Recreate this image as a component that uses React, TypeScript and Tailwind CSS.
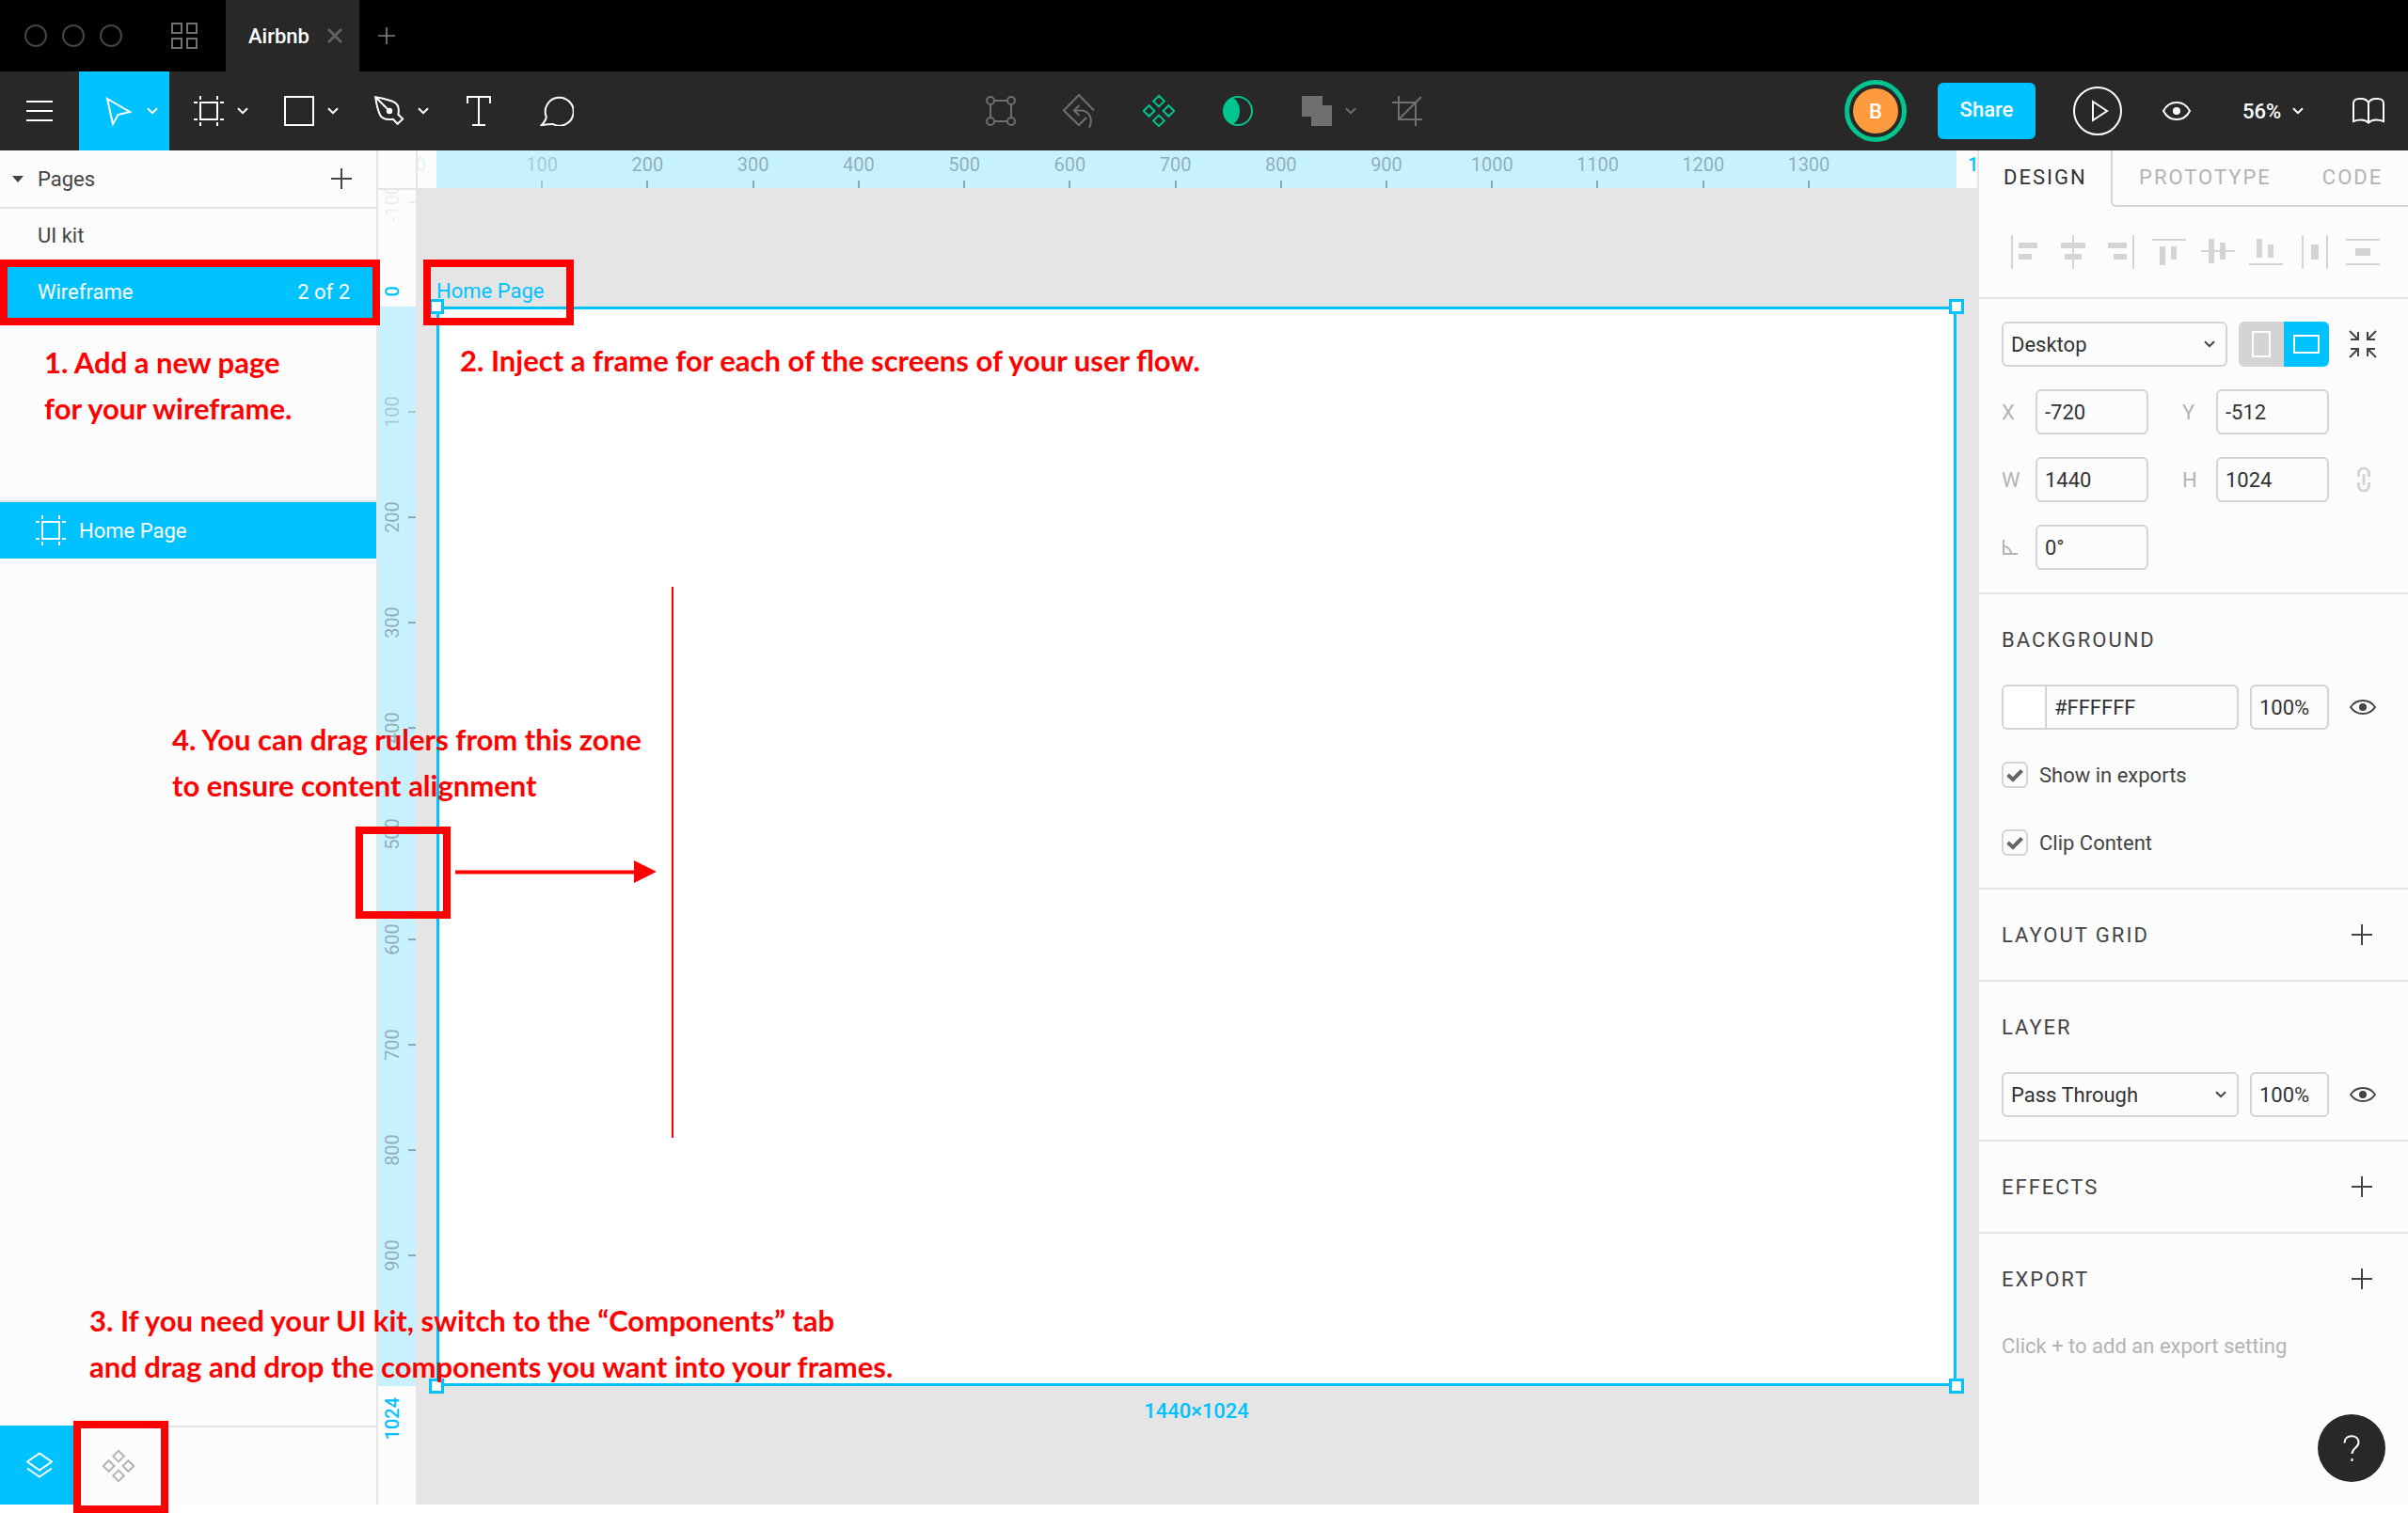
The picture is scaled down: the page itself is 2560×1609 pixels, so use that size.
import type { ReactNode } from "react";

const roboto = "font-['Roboto',sans-serif]";

/* ---------- Icons ---------- */

function Chevron() {
  return (
    <svg width="12" height="8" viewBox="0 0 12 8" fill="none" stroke="currentColor" strokeWidth="2" aria-hidden="true">
      <path d="M1 1.2 6 6.2 11 1.2" />
    </svg>
  );
}

function Plus({ size }: { size: number }) {
  return (
    <svg width={size} height={size} viewBox="0 0 22 22" fill="none" stroke="currentColor" strokeWidth="2" aria-hidden="true">
      <path d="M11 0V22M0 11H22" />
    </svg>
  );
}

function FrameIcon() {
  return (
    <svg width="32" height="32" viewBox="0 0 32 32" fill="none" stroke="currentColor" strokeWidth="2" aria-hidden="true">
      <rect x="7" y="7" width="18" height="18" />
      <path d="M7 0V4M25 0V4M7 28V32M25 28V32M0 7H4M0 25H4M28 7H32M28 25H32" />
    </svg>
  );
}

function ComponentsIcon() {
  return (
    <svg width="36" height="36" viewBox="0 0 36 36" fill="none" stroke="currentColor" strokeWidth="2" aria-hidden="true">
      <path d="M18 1.8 23.8 7.6 18 13.4 12.2 7.6ZM18 22.6 23.8 28.4 18 34.2 12.2 28.4ZM7.6 12.2 13.4 18 7.6 23.8 1.8 18ZM28.4 12.2 34.2 18 28.4 23.8 22.6 18Z" />
    </svg>
  );
}

function EyeIcon() {
  return (
    <svg width="30" height="20" viewBox="0 0 30 20" fill="none" stroke="currentColor" strokeWidth="2" aria-hidden="true">
      <path d="M1 10C4 4 9 1 15 1S26 4 29 10C26 16 21 19 15 19S4 16 1 10Z" />
      <circle cx="15" cy="10" r="4" fill="currentColor" stroke="none" />
    </svg>
  );
}

function SmallEye() {
  return (
    <svg width="28" height="16" viewBox="0 0 28 16" fill="none" stroke="currentColor" strokeWidth="2" aria-hidden="true">
      <path d="M1 8C4 3.4 8.5 1 14 1S24 3.4 27 8C24 12.6 19.500 15 14 15S4 12.600 1 8Z" />
      <circle cx="14" cy="8" r="4" fill="currentColor" stroke="none" />
    </svg>
  );
}

const alignIcons: { label: string; d: string; lines: string }[] = [
  { label: "Align left", lines: "M5 0V36", d: "M12 8H32V14H12ZM12 20H26V26H12Z" },
  { label: "Align horizontal centers", lines: "M19 0V36", d: "M6 8H32V14H6ZM10 20H28V26H10Z" },
  { label: "Align right", lines: "M31 0V36", d: "M4 8H24V14H4ZM10 20H24V26H10Z" },
  { label: "Align top", lines: "M0 5H36", d: "M8 12H14V32H8ZM20 12H26V26H20Z" },
  { label: "Align vertical centers", lines: "M0 17H36", d: "M8 4H14V30H8ZM20 8H26V26H20Z" },
  { label: "Align bottom", lines: "M0 31H36", d: "M8 4H14V24H8ZM20 10H26V24H20Z" },
  { label: "Distribute horizontal spacing", lines: "M5 0V36M31 0V36", d: "M14 10H22V26H14Z" },
  { label: "Distribute vertical spacing", lines: "M0 5H36M0 31H36", d: "M10 14H26V22H10Z" },
];

/* ---------- Window chrome ---------- */

function TabBar() {
  return (
    <header className="flex h-[76px] shrink-0 items-stretch bg-black">
      <div className="flex items-center gap-4 pl-[26px]">
        <span className="size-6 rounded-full border-2 border-[#444]" />
        <span className="size-6 rounded-full border-2 border-[#444]" />
        <span className="size-6 rounded-full border-2 border-[#444]" />
      </div>
      <button type="button" aria-label="All files" className="flex items-center pr-[30px] pl-[52px] text-[#707070]">
        <svg width="28" height="28" viewBox="0 0 28 28" fill="none" stroke="currentColor" strokeWidth="2">
          <path d="M1 1H11V11H1ZM17 1H27V11H17ZM1 17H11V27H1ZM17 17H27V27H17Z" />
        </svg>
      </button>
      <div className="flex w-[142px] items-center justify-between bg-[#282828] pr-[18px] pl-6">
        <span className="text-[22px] font-medium text-white">Airbnb</span>
        <button type="button" aria-label="Close tab" className="text-[#606060]">
          <svg width="16" height="16" viewBox="0 0 16 16" fill="none" stroke="currentColor" strokeWidth="3">
            <path d="M1 1 15 15M15 1 1 15" />
          </svg>
        </button>
      </div>
      <button type="button" aria-label="New tab" className="px-5 text-[#808080]">
        <Plus size={18} />
      </button>
    </header>
  );
}

function Tool({
  label,
  menu = false,
  active = false,
  width = "w-[84px]",
  color = "text-white",
  children,
}: {
  label: string;
  menu?: boolean;
  active?: boolean;
  width?: string;
  color?: string;
  children: ReactNode;
}) {
  return (
    <button
      type="button"
      aria-label={label}
      className={`flex h-full items-center ${menu ? "w-24" : width} ${active ? "bg-[#00c2ff]" : ""} ${color}`}
    >
      <span className={`flex shrink-0 justify-center ${width}`}>{children}</span>
      {menu && (
        <span className="-ml-3 shrink-0">
          <Chevron />
        </span>
      )}
    </button>
  );
}

function Toolbar() {
  return (
    <nav className="flex h-[84px] shrink-0 items-center bg-[#282828]">
      <div className="flex h-full flex-1">
        <Tool label="Main menu">
          <svg width="28" height="22" viewBox="0 0 28 22" stroke="currentColor" strokeWidth="2">
            <path d="M0 1H28M0 11H28M0 21H28" />
          </svg>
        </Tool>
        <Tool label="Move" menu active>
          <svg width="28" height="32" viewBox="0 0 28 32" fill="none" stroke="currentColor" strokeWidth="2">
            <path d="M2 3 26 17 13.500 20 8 30Z" />
          </svg>
        </Tool>
        <Tool label="Frame" menu>
          <FrameIcon />
        </Tool>
        <Tool label="Rectangle" menu>
          <svg width="32" height="32" viewBox="0 0 32 32" fill="none" stroke="currentColor" strokeWidth="2">
            <rect x="1" y="1" width="30" height="30" />
          </svg>
        </Tool>
        <Tool label="Pen" menu>
          <svg width="32" height="32" viewBox="0 0 32 32" fill="none" stroke="currentColor" strokeWidth="2">
            <path d="M1.200 1.200C2 8 4 16 6.200 20.500 8.500 24.800 13 25.800 20 24.800L24.600 29.800 30.200 24.400 25.400 19.800C26.600 13.500 26 9.500 21.500 6.800 16.500 4 8.500 2.600 1.200 1.200ZM1.200 1.200 15 15" />
            <circle cx="16" cy="16" r="3.200" fill="currentColor" stroke="none" />
          </svg>
        </Tool>
        <Tool label="Text" width="w-[82px]">
          <svg width="26" height="32" viewBox="0 0 26 32" fill="none" stroke="currentColor" strokeWidth="2">
            <path d="M1 8V1H25V8M13 1V31M6 31H20" />
          </svg>
        </Tool>
        <Tool label="Comment">
          <svg width="36" height="32" viewBox="0 0 36 32" fill="none" stroke="currentColor" strokeWidth="2">
            <path d="M6.800 22.300A15 15 0 1 1 14 30.100C10 30 6 30.500 1.800 31 4.500 28 6.500 25.500 6.800 22.300Z" />
          </svg>
        </Tool>
      </div>

      <div className="flex h-full">
        <Tool label="Edit object" color="text-[#6f6f6f]">
          <svg width="32" height="32" viewBox="0 0 32 32" fill="none" stroke="currentColor" strokeWidth="2">
            <circle cx="5" cy="5" r="4" />
            <circle cx="27" cy="5" r="4" />
            <circle cx="5" cy="27" r="4" />
            <circle cx="27" cy="27" r="4" />
            <path d="M9 5H23M9 27H23M5 9V23M27 9V23" />
          </svg>
        </Tool>
        <Tool label="Reset instance" color="text-[#6f6f6f]">
          <svg width="36" height="38" viewBox="1 0 36 38" fill="none" stroke="currentColor" strokeWidth="2">
            <path d="M34 18.500 18 2 2 18.500 18 34 26 26M18.500 13 13 18.500 18.500 24M13 18.500H20C28 18.500 34 26 29 37" />
          </svg>
        </Tool>
        <Tool label="Create component" color="text-[#00c58f]">
          <ComponentsIcon />
        </Tool>
        <Tool label="Use as mask" color="text-[#00c58f]">
          <svg width="32" height="32" viewBox="0 0 32 32" fill="none" stroke="currentColor" strokeWidth="2">
            <circle cx="16" cy="16" r="15" />
            <path d="M11 2A15 15 0 0 0 11 30C15.500 27 18 22 18 16S15.500 5 11 2Z" fill="currentColor" stroke="none" />
          </svg>
        </Tool>
        <Tool label="Union selection" menu color="text-[#6f6f6f]">
          <svg width="32" height="32" viewBox="0 0 32 32" fill="currentColor">
            <path d="M0 0H22V10H32V32H10V22H0Z" />
          </svg>
        </Tool>
        <Tool label="Crop image" color="text-[#6f6f6f]">
          <svg width="32" height="32" viewBox="0 0 32 32" fill="none" stroke="currentColor" strokeWidth="2">
            <path d="M7 0V25H32M0 7H25V32M7 25 31 1" />
          </svg>
        </Tool>
      </div>

      <div className="flex h-full flex-1 items-center justify-end">
        <button
          type="button"
          aria-label="Account"
          className="flex size-[66px] items-center justify-center rounded-full border-[5px] border-[#00c58f]"
        >
          <span className="flex size-12 items-center justify-center rounded-full bg-[#ff9a3e] text-[22px] font-medium text-white">
            B
          </span>
        </button>
        <button
          type="button"
          className="mr-6 ml-[33px] h-[60px] w-[104px] rounded-md bg-[#00c2ff] pb-1 text-[22px] font-medium text-white"
        >
          Share
        </button>
        <Tool label="Present">
          <svg width="52" height="52" viewBox="0 0 52 52" fill="none" stroke="currentColor" strokeWidth="2">
            <circle cx="26" cy="26" r="25" />
            <path d="M21 16V36L36 26Z" />
          </svg>
        </Tool>
        <Tool label="View settings">
          <EyeIcon />
        </Tool>
        <button type="button" className="flex h-full w-[120px] items-center gap-3 pl-7 text-[22px] font-medium text-white">
          56%
          <Chevron />
        </button>
        <Tool label="Libraries">
          <svg width="34" height="28" viewBox="0 0 34 28" fill="none" stroke="currentColor" strokeWidth="2">
            <path d="M17 5C15 2 12.500 1 9.500 1H7C3.500 1 1 3 1 6V25C6 23 13 22.500 17 26.500 21 22.500 28 23 33 25V6C33 3 30.500 1 27 1H24.500C21.500 1 19 2 17 5ZM17 5V26" />
          </svg>
        </Tool>
      </div>
    </nav>
  );
}

/* ---------- Left panel ---------- */

function LayersPanel() {
  return (
    <aside className="flex w-[402px] shrink-0 flex-col border-r-2 border-[#e5e5e5] bg-[#fcfcfc] text-[22px] text-[#444]">
      <div className="flex h-[62px] items-center border-b-2 border-[#e5e5e5] pr-[26px] pl-[13px]">
        <button type="button" className="flex flex-1 items-center gap-[15px]">
          <svg width="12" height="7" viewBox="0 0 12 7" fill="currentColor" aria-hidden="true">
            <path d="M0 0H12L6 7Z" />
          </svg>
          Pages
        </button>
        <button type="button" aria-label="Add page">
          <Plus size={22} />
        </button>
      </div>
      <button type="button" className="flex h-[58px] items-center pb-[2px] pl-10">
        UI kit
      </button>
      <button type="button" className="flex h-[60px] items-center justify-between bg-[#00c2ff] pr-7 pl-10 text-white">
        <span>Wireframe</span>
        <span>2 of 2</span>
      </button>
      <div className="h-[194px] border-b-2 border-[#e5e5e5]" />
      <button type="button" className="flex h-[60px] items-center gap-[14px] bg-[#00c2ff] pl-[38px] text-white">
        <FrameIcon />
        Home Page
      </button>
      <div className="flex-1" />
      <div className="flex h-[84px]">
        <button type="button" aria-label="Layers" className="flex w-[84px] items-center justify-center bg-[#00c2ff] text-white">
          <svg width="28" height="28" viewBox="0 0 28 28" fill="none" stroke="currentColor" strokeWidth="2">
            <path d="M14 1.500 27 10.500 14 19.500 1 10.500ZM1 17.500 14 26.500 27 17.500" />
          </svg>
        </button>
        <div className="flex flex-1 border-t-2 border-[#e5e5e5]">
          <button type="button" aria-label="Components" className="flex w-[84px] items-center justify-center text-[#b3b3b3]">
            <ComponentsIcon />
          </button>
        </div>
      </div>
    </aside>
  );
}

/* ---------- Canvas ---------- */

const FRAME_W = 1440;
const FRAME_H = 1024;
const xTicks = [100, 200, 300, 400, 500, 600, 700, 800, 900, 1000, 1100, 1200, 1300];
const yTicks = [100, 200, 300, 400, 500, 600, 700, 800, 900];

function TopRuler() {
  return (
    <div className="flex h-10 shrink-0 overflow-hidden text-[20px] leading-[30px] text-black/30">
      <div className="h-full w-[42px] shrink-0 border-r-2 border-[#e5e5e5] bg-[#fcfcfc]" />
      <div className="relative flex-1 overflow-hidden bg-[#fcfcfc] pr-[22px] pl-5">
        <div className="relative h-full bg-[#c7f1fe]">
          <span className="absolute top-0 right-full mr-[11px] text-[#00c2ff]/15">0</span>
          {xTicks.map((n) => (
            <div
              key={n}
              className={`absolute inset-y-0 flex w-16 -translate-x-1/2 flex-col items-center justify-between ${n === 100 ? "opacity-60" : ""}`}
              style={{ left: `${(n / FRAME_W) * 100}%` }}
            >
              <span>{n}</span>
              <span className="h-2 w-[2px] bg-black/30" />
            </div>
          ))}
          <span className="absolute top-0 left-full ml-3 font-medium text-[#00c2ff]">{FRAME_W}</span>
        </div>
      </div>
    </div>
  );
}

function LeftRuler() {
  return (
    <div className="relative w-10 shrink-0 overflow-hidden border-t-2 border-[#e5e5e5] bg-[#fcfcfc] pt-[124px] pb-[126px] text-[20px] leading-[30px] text-black/30">
      <div className="relative h-full bg-[#c7f1fe]">
        <div className="absolute inset-x-0 bottom-full mb-[91px] flex items-center justify-between opacity-20">
          <span className="rotate-180 [writing-mode:vertical-rl]">-100</span>
          <span className="h-[2px] w-2 bg-black/30" />
        </div>
        <span className="absolute bottom-full left-0 mb-[11px] rotate-180 font-medium text-[#00c2ff] [writing-mode:vertical-rl]">0</span>
        {yTicks.map((n) => (
          <div
            key={n}
            className={`absolute inset-x-0 flex -translate-y-1/2 items-center justify-between ${n === 100 ? "opacity-60" : ""}`}
            style={{ top: `${(n / FRAME_H) * 100}%` }}
          >
            <span className="rotate-180 [writing-mode:vertical-rl]">{n}</span>
            <span className="h-[2px] w-2 bg-black/30" />
          </div>
        ))}
        <span className="absolute top-full left-0 mt-3 rotate-180 font-medium text-[#00c2ff] [writing-mode:vertical-rl]">
          {FRAME_H}
        </span>
      </div>
    </div>
  );
}

function Canvas() {
  const handle = "absolute size-4 border-[3px] border-[#00c2ff] bg-white";
  return (
    <main className="flex min-w-0 flex-1 flex-col">
      <TopRuler />
      <div className="flex flex-1">
        <LeftRuler />
        <div className="flex-1 bg-[#e5e5e5] px-[22px] py-[126px]">
          <div className="relative h-full border-[3px] border-[#00c2ff] bg-white text-[22px] text-[#00c2ff]">
            <span className="absolute bottom-full -left-[3px] mb-[7px] leading-6">Home Page</span>
            <span className="absolute top-full left-1/2 mt-[18px] -translate-x-1/2 leading-6 font-medium">1440×1024</span>
            <span className={`${handle} -top-[11px] -left-[11px]`} />
            <span className={`${handle} -top-[11px] -right-[11px]`} />
            <span className={`${handle} -bottom-[11px] -left-[11px]`} />
            <span className={`${handle} -right-[11px] -bottom-[11px]`} />
          </div>
        </div>
      </div>
    </main>
  );
}

/* ---------- Right panel ---------- */

const field =
  "h-12 min-w-0 rounded-md border-2 border-[#d4d4d4] bg-[#fcfcfc] px-2 text-[22px] text-[#333] outline-none";

function Field({ id, label, value, icon }: { id: string; label: string; value: string; icon?: ReactNode }) {
  return (
    <div className="flex items-center">
      <label htmlFor={id} aria-label={label} className="w-9 text-[#b3b3b3]">
        {icon ?? label}
      </label>
      <input id={id} className={`${field} w-[120px]`} defaultValue={value} />
    </div>
  );
}

function SelectField({ label, value, className }: { label: string; value: string; className: string }) {
  return (
    <div className={`relative ${className}`}>
      <select aria-label={label} className={`${field} w-full appearance-none`} defaultValue={value}>
        <option>{value}</option>
      </select>
      <span className="pointer-events-none absolute inset-y-0 right-[13px] flex items-center">
        <Chevron />
      </span>
    </div>
  );
}

function SectionHeader({ title, action }: { title: string; action?: string }) {
  return (
    <div className="flex h-24 items-center justify-between pr-[38px]">
      <h2 className="tracking-[2px]">{title}</h2>
      {action && (
        <button type="button" aria-label={action}>
          <Plus size={22} />
        </button>
      )}
    </div>
  );
}

function Check({ label }: { label: string }) {
  return (
    <label className="flex h-12 items-center gap-3">
      <span className="relative flex size-7">
        <input type="checkbox" defaultChecked className="size-7 appearance-none rounded-md border-2 border-[#d4d4d4] bg-[#fcfcfc]" />
        <svg className="pointer-events-none absolute inset-0" width="28" height="28" viewBox="0 0 28 28" fill="none" stroke="#666" strokeWidth="4" aria-hidden="true">
          <path d="M6.500 14 12 19 21.500 9.500" />
        </svg>
      </span>
      {label}
    </label>
  );
}

const section = "border-b-2 border-[#e5e5e5] pl-6";

function PropertiesPanel() {
  return (
    <aside className="flex w-[458px] shrink-0 flex-col border-l-2 border-[#e5e5e5] bg-[#fcfcfc] text-[22px] text-[#444]">
      <div className="flex h-[60px] items-stretch" role="tablist">
        <button type="button" role="tab" aria-selected="true" className="w-[140px] pb-1 pl-[26px] text-left tracking-[2px] text-[#333]">
          DESIGN
        </button>
        <div className="flex flex-1 rounded-bl-md border-b-2 border-l-2 border-[#d4d4d4] text-[#b3b3b3]">
          <button type="button" role="tab" aria-selected="false" className="pb-[2px] pl-7 tracking-[2px]">
            PROTOTYPE
          </button>
          <button type="button" role="tab" aria-selected="false" className="pb-[2px] pl-[54px] tracking-[2px]">
            CODE
          </button>
        </div>
      </div>

      <div className="flex h-[98px] items-center justify-between border-b-2 border-[#e5e5e5] px-[30px] text-[#d4d4d4]">
        {alignIcons.map((icon) => (
          <button key={icon.label} type="button" aria-label={icon.label}>
            <svg width="36" height="36" viewBox="0 0 36 36">
              <path d={icon.d} fill="currentColor" />
              <path d={icon.lines} stroke="currentColor" strokeWidth="2" />
            </svg>
          </button>
        ))}
      </div>

      <section className={`${section} flex flex-col gap-6 py-6`}>
        <div className="flex items-center">
          <SelectField label="Frame preset" value="Desktop" className="w-[240px]" />
          <div className="ml-3 flex h-12 w-24 overflow-hidden rounded-md">
            <button type="button" aria-label="Portrait" className="flex flex-1 items-center justify-center bg-[#d4d4d4]">
              <span className="h-7 w-5 border-2 border-white" />
            </button>
            <button type="button" aria-label="Landscape" className="flex flex-1 items-center justify-center bg-[#00c2ff]">
              <span className="h-5 w-7 border-2 border-white" />
            </button>
          </div>
          <button type="button" aria-label="Resize to fit" className="ml-[21px]">
            <svg width="30" height="30" viewBox="0 0 30 30" fill="none" stroke="currentColor" strokeWidth="2">
              <path d="M1 1 10 10M10 2V10H2M29 1 20 10M20 2V10H28M1 29 10 20M2 20H10V28M29 29 20 20M28 20H20V28" />
            </svg>
          </button>
        </div>
        <div className="flex items-center gap-9">
          <Field id="pos-x" label="X" value="-720" />
          <Field id="pos-y" label="Y" value="-512" />
        </div>
        <div className="flex items-center gap-9">
          <Field id="size-w" label="W" value="1440" />
          <Field id="size-h" label="H" value="1024" />
          <button type="button" aria-label="Constrain proportions" className="-ml-[7px] text-[#d4d4d4]">
            <svg width="16" height="28" viewBox="0 0 16 28" fill="none" stroke="currentColor" strokeWidth="3">
              <path d="M2.500 11V7.500A5.500 5.500 0 0 1 13.500 7.500V11M2.500 17V20.500A5.500 5.500 0 0 0 13.500 20.500V17M8 8V20" />
            </svg>
          </button>
        </div>
        <Field
          id="rotation"
          label="Rotation"
          value="0°"
          icon={
            <svg width="17" height="17" viewBox="0 0 17 17" fill="none" stroke="currentColor" strokeWidth="2">
              <path d="M2 0V15H17M2 7A8 8 0 0 1 10 15" />
            </svg>
          }
        />
      </section>

      <section className={`${section} pb-6`}>
        <SectionHeader title="BACKGROUND" />
        <div className="flex items-center">
          <div className="flex h-12 w-[252px] overflow-hidden rounded-md border-2 border-[#d4d4d4]">
            <button type="button" aria-label="Fill color" className="w-[46px] border-r-2 border-[#d4d4d4] bg-white" />
            <input aria-label="Hex color" className="min-w-0 flex-1 px-2 text-[#333] outline-none" defaultValue="#FFFFFF" />
          </div>
          <input aria-label="Background opacity" className={`${field} ml-3 w-[84px]`} defaultValue="100%" />
          <button type="button" aria-label="Toggle background" className="ml-[22px]">
            <SmallEye />
          </button>
        </div>
        <div className="flex flex-col gap-6 pt-6">
          <Check label="Show in exports" />
          <Check label="Clip Content" />
        </div>
      </section>

      <section className={section}>
        <SectionHeader title="LAYOUT GRID" action="Add layout grid" />
      </section>

      <section className={`${section} pb-6`}>
        <SectionHeader title="LAYER" />
        <div className="flex items-center">
          <SelectField label="Blend mode" value="Pass Through" className="w-[252px]" />
          <input aria-label="Layer opacity" className={`${field} ml-3 w-[84px]`} defaultValue="100%" />
          <button type="button" aria-label="Toggle layer" className="ml-[22px]">
            <SmallEye />
          </button>
        </div>
      </section>

      <section className={section}>
        <SectionHeader title="EFFECTS" action="Add effect" />
      </section>

      <section className="pl-6">
        <SectionHeader title="EXPORT" action="Add export setting" />
        <p className="leading-[48px] text-[#b3b3b3]">Click + to add an export setting</p>
      </section>

      <div className="mt-auto flex justify-end p-6">
        <button type="button" aria-label="Help" className="flex size-[72px] items-center justify-center rounded-full bg-[#282828] text-white">
          <svg width="18" height="28" viewBox="0 0 18 28" fill="none" stroke="currentColor" strokeWidth="2">
            <path d="M1.500 8.500C1.500 4 4.500 1.200 9 1.200S16.500 4 16.500 8C16.500 14 9.500 13.500 9.500 20M9.500 25V28" />
          </svg>
        </button>
      </div>
    </aside>
  );
}

/* ---------- Tutorial notes laid over the editor ---------- */

function Notes() {
  const box = "absolute border-8 border-[#ff0000]";
  return (
    <div className="pointer-events-none absolute inset-0 overflow-hidden font-['Lato',sans-serif] text-[31px] leading-[49px] font-bold whitespace-nowrap text-[#ff0000]">
      <div className={`${box} top-[276px] left-0 h-[70px] w-[404px]`} />
      <p className="absolute top-[361px] left-[47px]">
        1. Add a new page
        <br />
        for your wireframe.
      </p>

      <div className={`${box} top-[276px] left-[450px] h-[70px] w-[160px]`} />
      <p className="absolute top-[359px] left-[489px]">2. Inject a frame for each of the screens of your user flow.</p>

      <div className={`${box} bottom-0 left-[78px] h-[98px] w-[101px]`} />
      <p className="absolute top-[1380px] left-[95px]">
        3. If you need your UI kit, switch to the “Components” tab
        <br />
        and drag and drop the components you want into your frames.
      </p>

      <p className="absolute top-[762px] left-[183px]">
        4. You can drag rulers from this zone
        <br />
        to ensure content alignment
      </p>
      <div className={`${box} top-[879px] left-[378px] h-[98px] w-[101px]`} />
      <svg className="absolute top-[915px] left-[484px]" width="214" height="24" viewBox="0 0 214 24" fill="currentColor" aria-hidden="true">
        <path d="M0 10.500H190V0L214 12 190 24V14.500H0Z" />
      </svg>
      <div className="absolute top-[624px] left-[714px] h-[586px] w-[2px] bg-[#ff0000]" />
    </div>
  );
}

export default function App() {
  return (
    <div className={`relative flex min-h-screen flex-col bg-white pb-[9px] ${roboto}`}>
      <TabBar />
      <Toolbar />
      <div className="flex flex-1 items-stretch">
        <LayersPanel />
        <Canvas />
        <PropertiesPanel />
      </div>
      <Notes />
    </div>
  );
}
